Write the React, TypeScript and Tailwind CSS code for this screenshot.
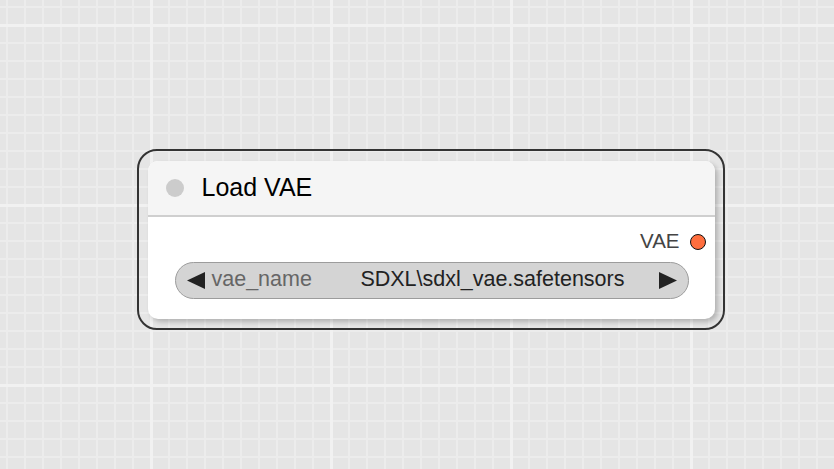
export default function App() {
    return (
        <div
            className="relative w-[834px] h-[469px] overflow-hidden bg-[#e5e5e5] font-['Liberation_Sans',Arial,sans-serif] [background-image:linear-gradient(to_right,#f1f1f1_3px,transparent_3px),linear-gradient(to_bottom,#f1f1f1_3px,transparent_3px),linear-gradient(to_right,#ececec_2px,transparent_2px),linear-gradient(to_bottom,#ececec_2px,transparent_2px)] [background-size:180px_180px,180px_180px,18px_18px,18px_18px] [background-position:150px_24px,150px_24px,6px_6px,6px_6px]"
        >
            {/* Node, selected */}
            <div className="absolute left-[137px] top-[149px] w-[588px] h-[181px] rounded-[20px] border-2 border-[#333] pl-[8.5px] pt-[9.5px]">
                <div className="w-[567px] h-[158px] rounded-[10px] bg-white shadow-[3px_3px_5px_rgba(0,0,0,0.22)] overflow-hidden flex flex-col">
                    {/* Title */}
                    <div className="h-[56px] shrink-0 bg-[#f5f5f5] border-b-2 border-[#cfcfcf] flex items-center pl-[18px]">
                        <span className="w-[18px] h-[18px] rounded-full bg-[#cccccc]" />
                        <span className="ml-[18px] text-[25px] leading-none text-black">Load VAE</span>
                    </div>

                    {/* Outputs */}
                    <div className="flex items-center justify-end pt-[13px] pr-[9px] h-[37px]">
                        <span className="text-[20.5px] leading-none text-[#444]">VAE</span>
                        <span className="ml-[10px] w-[16px] h-[16px] rounded-full bg-[#ff6e3e] border-[1.5px] border-[#111]" />
                    </div>

                    {/* Combo widget */}
                    <div className="mt-[8px] ml-[27px] mr-[26px] h-[37px] rounded-full bg-[#d4d4d4] border border-[#9c9c9c] flex items-center px-[11px]">
                        <svg width="18" height="17" viewBox="0 0 18 17" className="shrink-0">
                            <polygon points="18,0 18,17 0,8.5" fill="#222" />
                        </svg>
                        <span className="ml-[7px] text-[21.5px] leading-none text-[#666]">vae_name</span>
                        <span className="flex-1 text-right pr-[34px] text-[21.5px] leading-none text-[#222]">SDXL\sdxl_vae.safetensors</span>
                        <svg width="18" height="17" viewBox="0 0 18 17" className="shrink-0">
                            <polygon points="0,0 0,17 18,8.5" fill="#222" />
                        </svg>
                    </div>
                </div>
            </div>
        </div>
    );
}
